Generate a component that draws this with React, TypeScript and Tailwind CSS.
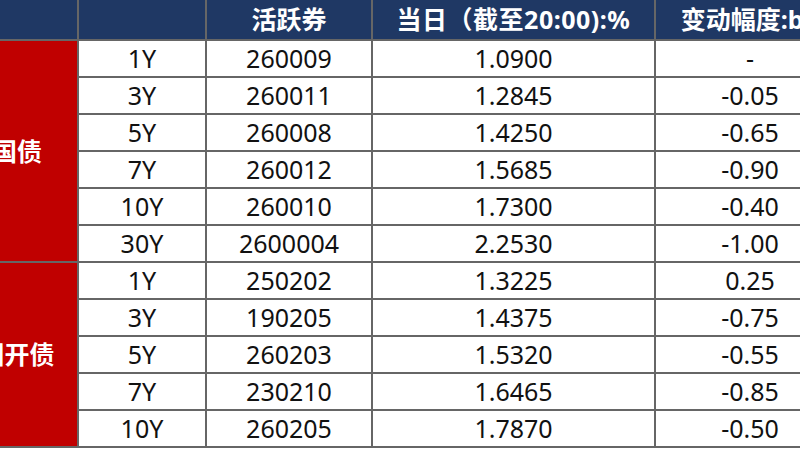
import React from 'react';

type Row = { tenor: string; code: string; rate: string; change: string };

const groups: { name: string; rows: Row[] }[] = [
  {
    name: '国债',
    rows: [
      { tenor: '1Y', code: '260009', rate: '1.0900', change: '-' },
      { tenor: '3Y', code: '260011', rate: '1.2845', change: '-0.05' },
      { tenor: '5Y', code: '260008', rate: '1.4250', change: '-0.65' },
      { tenor: '7Y', code: '260012', rate: '1.5685', change: '-0.90' },
      { tenor: '10Y', code: '260010', rate: '1.7300', change: '-0.40' },
      { tenor: '30Y', code: '2600004', rate: '2.2530', change: '-1.00' },
    ],
  },
  {
    name: '国开债',
    rows: [
      { tenor: '1Y', code: '250202', rate: '1.3225', change: '0.25' },
      { tenor: '3Y', code: '190205', rate: '1.4375', change: '-0.75' },
      { tenor: '5Y', code: '260203', rate: '1.5320', change: '-0.55' },
      { tenor: '7Y', code: '230210', rate: '1.6465', change: '-0.85' },
      { tenor: '10Y', code: '260205', rate: '1.7870', change: '-0.50' },
    ],
  },
];

const cell = 'border-2 border-[#666666] text-center p-0';

export default function App() {
  return (
    <div
      className="w-[800px] h-[450px] overflow-hidden bg-white"
      style={{ fontFamily: '"Noto Sans", "Noto Sans CJK SC", sans-serif' }}
    >
      <table className="table-fixed border-collapse ml-[-36px] w-[880px] text-[25px] leading-none text-[#111111]">
        <colgroup>
          <col className="w-[113px]" />
          <col className="w-[128px]" />
          <col className="w-[166px]" />
          <col className="w-[283px]" />
          <col className="w-[190px]" />
        </colgroup>
        <thead>
          <tr className="h-[40px] bg-[#1f3864] text-white font-bold text-[25px]">
            <th className={`${cell} border-t-0`}></th>
            <th className={`${cell} border-t-0`}></th>
            <th className={`${cell} border-t-0`}>活跃券</th>
            <th className={`${cell} border-t-0 tracking-[0.5px]`}>当日（截至20:00):%</th>
            <th className={`${cell} border-t-0 whitespace-nowrap`}>变动幅度:bp</th>
          </tr>
        </thead>
        <tbody>
          {groups.map((g) =>
            g.rows.map((r, i) => (
              <tr key={g.name + r.tenor} className="h-[37px]">
                {i === 0 && (
                  <td
                    rowSpan={g.rows.length}
                    className={`${cell} bg-[#c00000] text-white font-bold pr-[9px] whitespace-nowrap`}
                  >
                    {g.name}
                  </td>
                )}
                <td className={cell}>{r.tenor}</td>
                <td className={cell}>{r.code}</td>
                <td className={cell}>{r.rate}</td>
                <td className={cell}>{r.change}</td>
              </tr>
            ))
          )}
        </tbody>
      </table>
    </div>
  );
}
